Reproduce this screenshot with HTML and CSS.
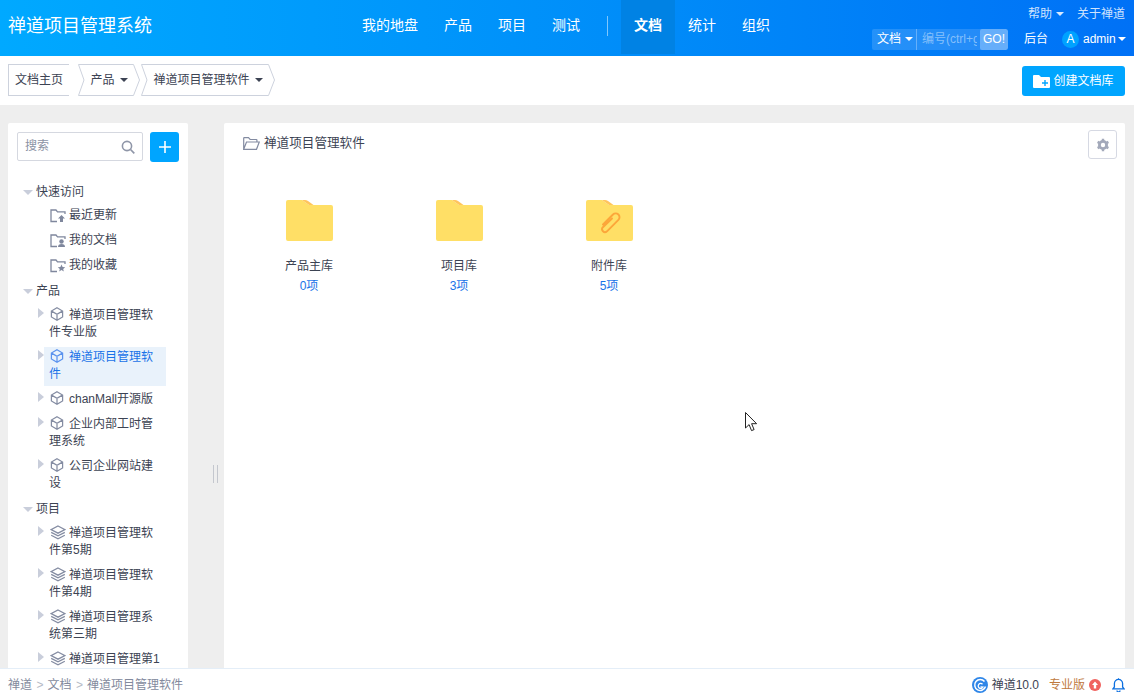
FILE: index.html
```html
<!DOCTYPE html>
<html lang="zh-CN">
<head>
<meta charset="utf-8">
<title>禅道项目管理系统</title>
<link rel="stylesheet" href="styles.css">
</head>
<body>
<svg class="defs" width="0" height="0" aria-hidden="true">
  <symbol id="cube" viewBox="0 0 14 14"><path d="M7 .8 12.600 4v6L7 13.200 1.400 10V4zM1.600 4.100 7 7.200l5.400-3.100M7 7.200v5.800" fill="none" stroke="currentColor" stroke-width="1.250"/></symbol>
  <symbol id="stack" viewBox="0 0 16 15"><path d="M8 1 15 4.600 8 8.200 1 4.600zM1.200 7.400 8 10.800l6.800-3.400M1.200 10.200 8 13.800l6.800-3.600" fill="none" stroke="currentColor" stroke-width="1.300"/></symbol>
  <symbol id="fold" viewBox="0 0 47 41"><path d="M0 2a2 2 0 0 1 2-2h14l7 5h22a2 2 0 0 1 2 2v32a2 2 0 0 1-2 2H2a2 2 0 0 1-2-2z" fill="#ffdf66"/><path d="M16 0h3q1.500 0 3 1l5.500 4H23z" fill="#ffc55d"/></symbol>
  <symbol id="qfold" viewBox="0 0 16 14"><path d="M7 12.500H1V1h5l1.500 1.800H15V5" fill="none" stroke="currentColor" stroke-width="1.300"/></symbol>
</svg>

<header class="top">
  <div class="logo">禅道项目管理系统</div>
  <nav class="nav">
    <a>我的地盘</a><a>产品</a><a>项目</a><a>测试</a><i class="nav-sep"></i><a class="on">文档</a><a>统计</a><a>组织</a>
  </nav>
  <div class="top-right">
    <div class="tr-row1"><span>帮助<b class="caret cw"></b></span><span>关于禅道</span></div>
    <div class="tr-row2">
      <div class="search">
        <span class="s-type">文档<b class="caret cw"></b></span>
        <span class="s-input">编号(ctrl+g</span>
        <span class="s-go">GO!</span>
      </div>
      <span class="backend">后台</span>
      <span class="avatar">A</span>
      <span class="uname">admin<b class="caret cw"></b></span>
    </div>
  </div>
</header>

<div class="bar">
  <div class="crumbs">
    <span class="crumb first">文档主页</span>
    <div class="crumb-arrow">
      <svg class="ca" width="7" height="32" viewBox="0 0 7 32"><path d="M7 .5H.5L6 16 .5 31.500H7" fill="none" stroke="#cdd2dd"/></svg>
      <span class="crumb mid">产品<b class="caret cd"></b></span>
      <svg class="ca" width="7" height="32" viewBox="0 0 7 32"><path d="M0 .5H.5L6.500 16 .5 31.500H0" fill="none" stroke="#cdd2dd"/></svg>
    </div>
    <div class="crumb-arrow">
      <svg class="ca" width="7" height="32" viewBox="0 0 7 32"><path d="M7 .5H.5L6 16 .5 31.500H7" fill="none" stroke="#cdd2dd"/></svg>
      <span class="crumb mid">禅道项目管理软件<b class="caret cd"></b></span>
      <svg class="ca" width="7" height="32" viewBox="0 0 7 32"><path d="M0 .5H.5L6.500 16 .5 31.500H0" fill="none" stroke="#cdd2dd"/></svg>
    </div>
  </div>
  <button class="create">
    <svg width="17" height="13" viewBox="0 0 17 13"><path d="M0 1a1 1 0 0 1 1-1h5l2 2h8a1 1 0 0 1 1 1v9a1 1 0 0 1-1 1H1a1 1 0 0 1-1-1z" fill="#fff"/><path d="M12 5v6M9 8h6" stroke="#00a5ff" stroke-width="1.400"/></svg>
    创建文档库
  </button>
</div>

<div class="body">
  <aside class="side">
    <div class="side-tools">
      <div class="side-search">
        <span>搜索</span>
        <svg width="14" height="14" viewBox="0 0 14 14"><circle cx="6" cy="6" r="4.600" fill="none" stroke="#8f96a8" stroke-width="1.600"/><path d="m9.500 9.500 3.800 3.800" stroke="#8f96a8" stroke-width="1.700"/></svg>
      </div>
      <button class="plus">
        <svg width="12" height="12" viewBox="0 0 12 12"><path d="M6 0v12M0 6h12" stroke="#fff" stroke-width="1.600"/></svg>
      </button>
    </div>

    <div class="head head-first"><i class="tri-d"></i>快速访问</div>
    <div class="quick">
      <svg class="qi" width="16" height="14" viewBox="0 0 16 14"><use href="#qfold"/><path d="M11.500 6 15 9.500h-2V13h-3V9.500H8z" fill="currentColor"/></svg>最近更新
    </div>
    <div class="quick">
      <svg class="qi" width="16" height="14" viewBox="0 0 16 14"><use href="#qfold"/><circle cx="11.500" cy="7.500" r="2.200" fill="currentColor"/><path d="M8 13q0-3 3.500-3t3.500 3z" fill="currentColor"/></svg>我的文档
    </div>
    <div class="quick">
      <svg class="qi" width="16" height="14" viewBox="0 0 16 14"><use href="#qfold"/><path d="m11.500 5.500 1.100 2.500 2.600.2-2 1.700.6 2.600-2.300-1.400-2.300 1.400.6-2.600-2-1.700 2.600-.2z" fill="currentColor"/></svg>我的收藏
    </div>

    <div class="head"><i class="tri-d"></i>产品</div>
    <div class="row"><i class="tri-r"></i><div class="cell"><svg class="ic" width="14" height="14"><use href="#cube"/></svg>禅道项目管理软件专业版</div></div>
    <div class="row"><i class="tri-r"></i><div class="cell sel"><svg class="ic" width="14" height="14"><use href="#cube"/></svg>禅道项目管理软件</div></div>
    <div class="row"><i class="tri-r"></i><div class="cell"><svg class="ic" width="14" height="14"><use href="#cube"/></svg>chanMall开源版</div></div>
    <div class="row"><i class="tri-r"></i><div class="cell"><svg class="ic" width="14" height="14"><use href="#cube"/></svg>企业内部工时管理系统</div></div>
    <div class="row"><i class="tri-r"></i><div class="cell"><svg class="ic" width="14" height="14"><use href="#cube"/></svg>公司企业网站建设</div></div>

    <div class="head"><i class="tri-d"></i>项目</div>
    <div class="row"><i class="tri-r"></i><div class="cell"><svg class="ic st" width="16" height="15"><use href="#stack"/></svg>禅道项目管理软件第5期</div></div>
    <div class="row"><i class="tri-r"></i><div class="cell"><svg class="ic st" width="16" height="15"><use href="#stack"/></svg>禅道项目管理软件第4期</div></div>
    <div class="row"><i class="tri-r"></i><div class="cell"><svg class="ic st" width="16" height="15"><use href="#stack"/></svg>禅道项目管理系统第三期</div></div>
    <div class="row"><i class="tri-r"></i><div class="cell"><svg class="ic st" width="16" height="15"><use href="#stack"/></svg>禅道项目管理第1期</div></div>
  </aside>

  <div class="split"><i></i></div>

  <main class="main">
    <div class="main-head">
      <div class="main-title">
        <svg width="17" height="13" viewBox="0 0 17 13"><path d="M.7 12.300V1.300q0-.6.6-.6h4.200l1.600 1.800h6.200q.6 0 .6.600V5M.7 12.300 3.500 5h12.800l-2.800 7.300z" fill="none" stroke="#838ba1" stroke-width="1.200"/></svg>
        禅道项目管理软件
      </div>
      <button class="gear">
        <svg width="14" height="14" viewBox="0 0 14 14"><circle cx="7" cy="7" r="3.600" fill="none" stroke="#a3a9ba" stroke-width="2.800"/><path d="M7 .8v2.400M7 10.800v2.400M1.600 3.900l2.100 1.200M10.300 8.900l2.100 1.200M1.600 10.100l2.100-1.200M10.300 5.100l2.100-1.200" stroke="#a3a9ba" stroke-width="2.400"/></svg>
      </button>
    </div>
    <div class="libs">
      <div class="lib">
        <svg width="47" height="41"><use href="#fold"/></svg>
        <div class="lib-name">产品主库</div>
        <div class="lib-count">0项</div>
      </div>
      <div class="lib">
        <svg width="47" height="41"><use href="#fold"/></svg>
        <div class="lib-name">项目库</div>
        <div class="lib-count">3项</div>
      </div>
      <div class="lib">
        <svg width="47" height="41" viewBox="0 0 47 41"><use href="#fold"/><path d="M17 24.500 27 14.500a3.800 3.800 0 0 1 5.400 5.400L21 31.300a2.900 2.900 0 0 1-4.100-4.100L26 18.500" fill="none" stroke="#fca63a" stroke-width="1.900" stroke-linecap="round"/></svg>
        <div class="lib-name">附件库</div>
        <div class="lib-count">5项</div>
      </div>
    </div>
  </main>
</div>

<footer class="foot">
  <div class="path">禅道<em>&gt;</em>文档<em>&gt;</em>禅道项目管理软件</div>
  <div class="foot-right">
    <svg class="flogo" width="16" height="16" viewBox="0 0 16 16"><circle cx="8" cy="8" r="8" fill="#2f86e8"/><path d="M12.500 4.500A5.500 5.500 0 1 0 13.500 9.500" fill="none" stroke="#fff" stroke-width="1.500"/><path d="M10.500 7.200A2.500 2.500 0 1 0 11 10l-2.500-.2" fill="none" stroke="#fff" stroke-width="1.300"/></svg>
    <span class="ver">禅道10.0</span>
    <span class="pro">专业版</span>
    <svg class="up" width="12" height="12" viewBox="0 0 12 12"><circle cx="6" cy="6" r="6" fill="#f0625f"/><path d="M6 2.500 9 6H7.200v3.500H4.800V6H3z" fill="#fff"/></svg>
    <svg class="bell" width="13" height="14" viewBox="0 0 13 14"><path d="M1 10.800h11L10.600 9V5.500a4.100 4.100 0 0 0-8.200 0V9zM5 12.500a1.500 1.500 0 0 0 3 0M6.500 .3v1" fill="none" stroke="#0c6fe0" stroke-width="1.300"/></svg>
  </div>
</footer>

<svg class="cursor" width="13" height="20" viewBox="0 0 13 20"><path d="M.5.500V16l3.600-3.400 2.400 6 2.600-1-2.500-5.900h5z" fill="#fff" stroke="#222" stroke-width="1"/></svg>
</body>
</html>
```
FILE: styles.css
```css
* { box-sizing: border-box; }
html, body { margin: 0; height: 100%; overflow: hidden; }
body {
  width: 1134px; height: 693px;
  display: flex; flex-direction: column;
  font: 12px/17px "Liberation Sans", "Noto Sans CJK SC", sans-serif;
  color: #3c4353; background: #eee;
  position: relative;
}
.defs { position: absolute; }
button { font: inherit; border: 0; padding: 0; }

/* Header */
.top {
  flex: none; height: 56px; display: flex; color: #fff; padding-left: 8px;
  background: linear-gradient(90deg, #00a9ff 0%, #008df9 55%, #0071f6 100%);
}
.logo { flex: none; width: 341px; font-size: 18px; line-height: 52px; }
.nav { display: flex; align-items: flex-start; font-size: 14px; }
.nav a { height: 54px; line-height: 51px; padding: 0 13px; }
.nav a.on { background: #0082e4; font-weight: bold; }
.nav-sep { width: 1px; height: 20px; margin: 16px 13px 0 14px; background: rgba(255,255,255,.5); }
.top-right { flex: none; margin-left: auto; padding-right: 9px; width: 262px; font-size: 12px; }
.tr-row1 { display: flex; justify-content: flex-end; gap: 12px; height: 28px; padding-top: 6px; color: rgba(255,255,255,.82); }
.tr-row2 { display: flex; align-items: center; height: 22px; white-space: nowrap; }
.caret { display: inline-block; width: 0; height: 0; margin-left: 4px; vertical-align: 2px; border: 4px solid transparent; border-bottom-width: 0; }
.caret.cw { border-top-color: #fff; }
.caret.cd { border-top-color: #3c4353; margin-left: 5px; }
.tr-row1 .caret { opacity: .85; margin-right: 1px; }
.search { flex: none; display: flex; align-items: center; height: 21px; width: 136px; border-radius: 2px; background: rgba(255,255,255,.14); overflow: hidden; }
.s-type { width: 45px; padding-left: 5px; white-space: nowrap; border-right: 1px solid rgba(255,255,255,.3); line-height: 21px; }
.s-input { flex: 1; min-width: 0; margin-right: 3px; padding-left: 5px; white-space: nowrap; overflow: hidden; color: rgba(255,255,255,.45); line-height: 21px; }
.s-go { width: 28px; flex: none; text-align: center; line-height: 21px; background: rgba(255,255,255,.3); border-radius: 2px; }
.backend { flex: none; margin-left: 16px; }
.avatar { flex: none; margin-left: 14px; width: 17px; height: 17px; line-height: 17px; border-radius: 50%; text-align: center; background: #00a2ff; }
.uname { flex: none; margin-left: 4px; }
.uname .caret { margin-left: 2px; }

/* Toolbar */
.bar { flex: none; height: 49px; background: #fff; display: flex; align-items: flex-start; justify-content: space-between; padding: 8px 9px 0 8px; }
.crumbs { display: flex; align-items: center; }
.crumb { display: block; height: 32px; line-height: 30px; white-space: nowrap; border-top: 1px solid #cdd2dd; border-bottom: 1px solid #cdd2dd; }
.crumb.first { width: 61px; padding-left: 6px; border-left: 1px solid #cdd2dd; margin-right: 9px; }
.crumb.mid { padding: 0 5.500px; }
.crumb-arrow { display: flex; margin-right: 1px; }
.ca { display: block; }
.create { margin-top: 2px; width: 103px; height: 30px; border-radius: 3px; background: #00a5ff; color: #fff; display: flex; align-items: center; justify-content: center; gap: 3px; }

/* Body */
.body { flex: 1; min-height: 0; display: flex; padding: 18px 9px 0 8px; }
.side { flex: none; width: 180px; background: #fff; border-radius: 2px 2px 0 0; overflow: hidden; padding: 9px 9px 0; }
.side-tools { display: flex; justify-content: space-between; height: 30px; margin-bottom: 22px; }
.side-search { width: 126px; height: 29px; padding: 0 7px; border: 1px solid #d5d8e0; border-radius: 2px; display: flex; align-items: center; justify-content: space-between; color: #8b92a4; }
.plus { width: 29px; height: 30px; border-radius: 3px; background: #00a5ff; display: flex; align-items: center; justify-content: center; }
.head { display: flex; align-items: center; height: 17px; margin: 9px 0 5px; padding-left: 6px; }
.head-first { margin-top: 0; margin-bottom: 6px; }
.row + .head { margin-top: 6px; }
.tri-d { width: 0; height: 0; margin-right: 3px; border: 5px solid transparent; border-top: 5px solid #c9cedb; border-bottom: 0; }
.quick { display: flex; align-items: center; height: 17px; margin-bottom: 8px; padding-left: 33px; }
.qi { color: #7f879d; margin-right: 3px; }
.row { display: flex; align-items: flex-start; padding-left: 21px; margin-bottom: 3px; }
.tri-r { flex: none; width: 0; height: 0; margin-top: 3px; border: 5px solid transparent; border-left: 6px solid #c9cedb; border-right: 0; }
.cell { width: 122px; padding: 2px 5px 3px; word-break: break-all; }
.ic { color: #848ca2; margin: 0 5px 0 1px; vertical-align: -2px; }
.ic.st { margin-right: 3px; vertical-align: -3px; }
.cell.sel { background: #e9f2fb; color: #1a73e8; }
.cell.sel .ic { color: #5a92ee; }

.split { flex: none; width: 36px; padding: 342px 0 0 25px; }
.split i { display: block; width: 5px; height: 18px; border-left: 1px solid #c4c7ce; border-right: 1px solid #c4c7ce; }

.main { flex: 1; background: #fff; border-radius: 2px 2px 0 0; }
.main-head { display: flex; justify-content: space-between; align-items: flex-start; padding: 7px 8px 0 19px; height: 77px; }
.main-title { display: flex; align-items: center; gap: 4px; font-size: 12.600px; height: 26px; }
.gear { width: 29px; height: 29px; background: #fff; border: 1px solid #d6d9e3; border-radius: 3px; display: flex; align-items: center; justify-content: center; }
.libs { display: flex; padding-left: 10px; }
.lib { width: 150px; display: flex; flex-direction: column; align-items: center; }
.lib svg { display: block; }
.lib-name { margin-top: 17px; }
.lib-count { margin-top: 3px; color: #1a73e8; }

/* Footer */
.foot { flex: none; height: 25px; background: #fff; border-top: 1px solid #e4eef8; display: flex; align-items: center; justify-content: space-between; padding: 8px 9px 0 8px; }
.path { color: #838a9d; white-space: nowrap; }
.path em { font-style: normal; color: #b5bac6; margin: 0 4px 0 4.500px; }
.foot-right { display: flex; align-items: center; }
.ver { margin-left: 4px; }
.pro { margin-left: 10px; color: #bf7a3f; }
.up { margin-left: 4px; }
.bell { margin-left: 11px; }

/* Recording cursor floating over the page */
.cursor { position: absolute; left: 745px; top: 412px; }
```
